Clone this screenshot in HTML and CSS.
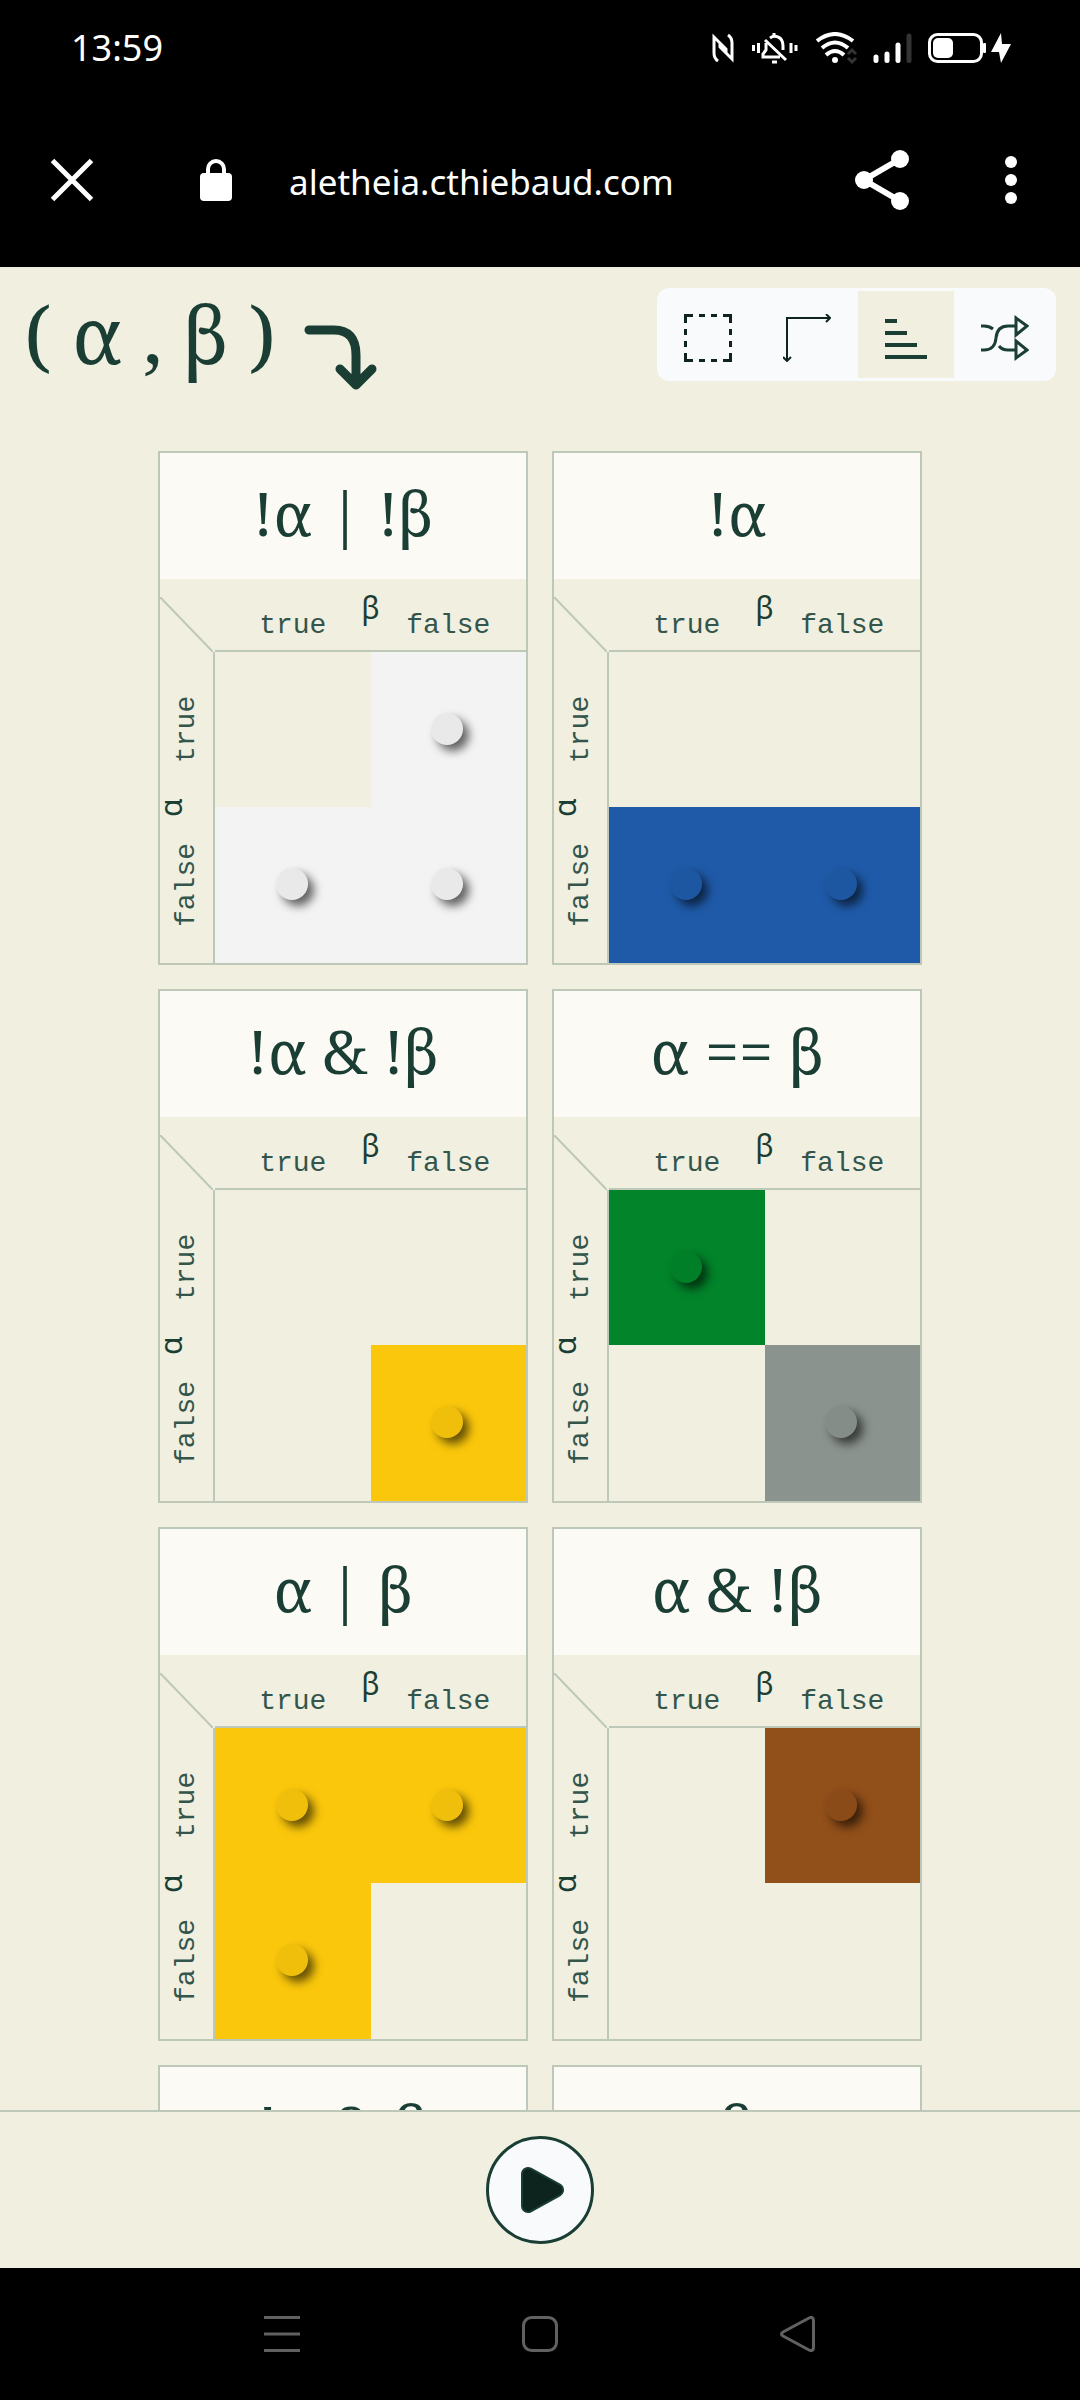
FILE: index.html
```html
<!DOCTYPE html>
<html lang="en">
<head>
<meta charset="utf-8">
<meta name="viewport" content="width=device-width, initial-scale=1">
<title>Aletheia</title>
<link rel="stylesheet" href="styles.css">
</head>
<body>
<div class="status">
  <span class="clock">13:59</span>
  <div class="status-icons">
    <svg class="nfc" width="22" height="30" viewBox="0 0 22 30" fill="none" stroke="#fff" stroke-width="3"><path d="M6 28C3 26 2 24 2 20V4L14 16V20M16 2C19 4 20 6 20 10V26L8 14V10"/></svg>
    <svg class="bell" width="46" height="32" viewBox="0 0 46 32" fill="none" stroke="#fff" stroke-width="3"><path d="M1.500 13V19M6.500 11V21M39 11V21M44 13V19"/><path d="M18 6Q22 3 26 5Q31 7 31 14V18M14 11V18L11 22V25H28M13 8L34 28"/><path d="M22 1V4M20 30H25"/></svg>
    <svg class="wifi" width="42" height="32" viewBox="0 0 42 32" fill="none" stroke="#fff" stroke-width="4"><path d="M1 9Q19-5 37 9M6 16Q19 5 32 16M10 23Q19 15 28 23"/><circle cx="19" cy="28" r="3" fill="#fff" stroke="none"/><path d="M32 22L36 18L40 22M32 26L36 30L40 26" stroke="#333" stroke-width="3"/></svg>
    <svg class="signal" width="40" height="32" viewBox="0 0 40 32" stroke-width="5" stroke-linecap="round"><path d="M3 25V28.500M14 22V28.500M25 13V28.500" stroke="#fff"/><path d="M36 4V28.500" stroke="#333"/></svg>
    <svg width="84" height="32" viewBox="0 0 84 32"><rect x="1.500" y="2.500" width="52" height="27" rx="8" fill="none" stroke="#fff" stroke-width="3"/><rect x="5" y="6" width="20" height="20" rx="5" fill="#fff"/><rect x="55" y="11" width="3" height="10" rx="1" fill="#fff"/><path d="M73 1L63 20H71L73 31L83 12H74Z" fill="#fff"/></svg>
  </div>
</div>
<nav class="browser" aria-label="Browser">
  <button class="plain" aria-label="Close"><svg width="44" height="44" viewBox="0 0 44 44" stroke="#fff" stroke-width="5"><path d="M2.500 2.500L41.500 41.500M41.500 2.500L2.500 41.500"/></svg></button>
  <svg class="lock" width="32" height="44" viewBox="0 0 32 44"><rect y="15" width="32" height="28" rx="4" fill="#fff"/><path d="M8 17V11A8 8 0 0 1 24 11V17" fill="none" stroke="#fff" stroke-width="4"/></svg>
  <span class="url">aletheia.cthiebaud.com</span>
  <button class="plain" aria-label="Share"><svg width="54" height="60" viewBox="0 0 54 60" fill="#fff"><path d="M45 9L9 30L45 51" fill="none" stroke="#fff" stroke-width="6"/><circle cx="45" cy="9" r="9"/><circle cx="9" cy="30" r="9"/><circle cx="45" cy="51" r="9"/></svg></button>
  <button class="plain more" aria-label="More"><svg width="12" height="48" viewBox="0 0 12 48" fill="#fff"><circle cx="6" cy="6" r="6"/><circle cx="6" cy="24" r="6"/><circle cx="6" cy="42" r="6"/></svg></button>
</nav>
<main class="page">
  <header class="top">
    <h1>( α , β )</h1>
    <svg class="arrow" width="74" height="68" viewBox="0 0 74 68" fill="none" stroke="#1a3e34" stroke-width="9" stroke-linecap="round" stroke-linejoin="round"><path d="M5 7H30Q52 7 52 32V60M36 46L52 62L68 46"/></svg>
    <div class="tools" role="toolbar">
      <button aria-label="Square"><svg width="48" height="48" viewBox="0 0 48 48" fill="none" stroke="#10241e" stroke-width="3"><path d="M1.500 9V1.500H9M15 1.500H21M27 1.500H33M39 1.500H46.500V9M46.500 15V21M46.500 27V33M46.500 39V46.500H39M33 46.500H27M21 46.500H15M9 46.500H1.500V39M1.500 33V27M1.500 21V15"/></svg></button>
      <button aria-label="Axes"><svg width="48" height="48" viewBox="0 0 48 48" fill="none" stroke="#10241e" stroke-width="2"><path d="M4 47V4H47M43 0L47 4L43 8M0 43L4 47L8 43"/></svg></button>
      <button class="on" aria-label="Sort"><svg width="48" height="48" viewBox="0 0 48 48" stroke="#1a3e34" stroke-width="4"><path d="M3 7H15M3 19H25M3 31H35M3 43H45"/></svg></button>
      <button aria-label="Shuffle"><svg width="48" height="48" viewBox="0 0 48 48" fill="none" stroke="#1a3e34" stroke-width="3"><path d="M0 12H3Q8 12 12 15M0 36H3Q14 36 15 24Q16 12 27 12H35M18 32Q21 36 27 36H35M35 4V21L46 12ZM35 27V44L46 36Z"/></svg></button>
    </div>
  </header>
  <section class="cards">
    <article class="card">
      <h2>!α | !β</h2>
      <table>
        <thead><tr><td class="corner"><svg width="53" height="55" viewBox="0 0 53 55"><path d="M0 0L53 55" stroke="#bdc8b9" stroke-width="2"/></svg></td><th colspan="2"><div class="axis"><span>true</span><b>β</b><span>false</span></div></th></tr></thead>
        <tbody>
          <tr><th rowspan="2"><div class="axis side"><span>false</span><b>α</b><span>true</span></div></th><td></td><td class="white"><i></i></td></tr>
          <tr><td class="white"><i></i></td><td class="white"><i></i></td></tr>
        </tbody>
      </table>
    </article>
    <article class="card">
      <h2>!α</h2>
      <table>
        <thead><tr><td class="corner"><svg width="53" height="55" viewBox="0 0 53 55"><path d="M0 0L53 55" stroke="#bdc8b9" stroke-width="2"/></svg></td><th colspan="2"><div class="axis"><span>true</span><b>β</b><span>false</span></div></th></tr></thead>
        <tbody>
          <tr><th rowspan="2"><div class="axis side"><span>false</span><b>α</b><span>true</span></div></th><td></td><td></td></tr>
          <tr><td class="blue"><i></i></td><td class="blue"><i></i></td></tr>
        </tbody>
      </table>
    </article>
    <article class="card">
      <h2>!α &amp; !β</h2>
      <table>
        <thead><tr><td class="corner"><svg width="53" height="55" viewBox="0 0 53 55"><path d="M0 0L53 55" stroke="#bdc8b9" stroke-width="2"/></svg></td><th colspan="2"><div class="axis"><span>true</span><b>β</b><span>false</span></div></th></tr></thead>
        <tbody>
          <tr><th rowspan="2"><div class="axis side"><span>false</span><b>α</b><span>true</span></div></th><td></td><td></td></tr>
          <tr><td></td><td class="yellow"><i></i></td></tr>
        </tbody>
      </table>
    </article>
    <article class="card">
      <h2>α == β</h2>
      <table>
        <thead><tr><td class="corner"><svg width="53" height="55" viewBox="0 0 53 55"><path d="M0 0L53 55" stroke="#bdc8b9" stroke-width="2"/></svg></td><th colspan="2"><div class="axis"><span>true</span><b>β</b><span>false</span></div></th></tr></thead>
        <tbody>
          <tr><th rowspan="2"><div class="axis side"><span>false</span><b>α</b><span>true</span></div></th><td class="green"><i></i></td><td></td></tr>
          <tr><td></td><td class="gray"><i></i></td></tr>
        </tbody>
      </table>
    </article>
    <article class="card">
      <h2>α | β</h2>
      <table>
        <thead><tr><td class="corner"><svg width="53" height="55" viewBox="0 0 53 55"><path d="M0 0L53 55" stroke="#bdc8b9" stroke-width="2"/></svg></td><th colspan="2"><div class="axis"><span>true</span><b>β</b><span>false</span></div></th></tr></thead>
        <tbody>
          <tr><th rowspan="2"><div class="axis side"><span>false</span><b>α</b><span>true</span></div></th><td class="yellow"><i></i></td><td class="yellow"><i></i></td></tr>
          <tr><td class="yellow"><i></i></td><td></td></tr>
        </tbody>
      </table>
    </article>
    <article class="card">
      <h2>α &amp; !β</h2>
      <table>
        <thead><tr><td class="corner"><svg width="53" height="55" viewBox="0 0 53 55"><path d="M0 0L53 55" stroke="#bdc8b9" stroke-width="2"/></svg></td><th colspan="2"><div class="axis"><span>true</span><b>β</b><span>false</span></div></th></tr></thead>
        <tbody>
          <tr><th rowspan="2"><div class="axis side"><span>false</span><b>α</b><span>true</span></div></th><td></td><td class="brown"><i></i></td></tr>
          <tr><td></td><td></td></tr>
        </tbody>
      </table>
    </article>
    <article class="card"><h2>!α &amp; β</h2></article>
    <article class="card"><h2>β</h2></article>
  </section>
</main>
<footer class="player">
  <button class="play" aria-label="Play"><svg width="46" height="48" viewBox="0 0 46 48"><path d="M8 8V40L37 24Z" fill="#0d231d" stroke="#1a3e34" stroke-width="14" stroke-linejoin="round"/><path d="M8 8V40L37 24Z" fill="#0d231d" stroke="#0d231d" stroke-width="10" stroke-linejoin="round"/></svg></button>
</footer>
<nav class="system" aria-label="System">
  <button class="plain" aria-label="Recent"><svg width="36" height="36" viewBox="0 0 36 36" stroke="#616161" stroke-width="3"><path d="M0 1.500H36M0 18H36M0 34.500H36"/></svg></button>
  <button class="plain" aria-label="Home"><svg width="36" height="36" viewBox="0 0 36 36" fill="none" stroke="#616161" stroke-width="3"><rect x="1.500" y="1.500" width="33" height="33" rx="8"/></svg></button>
  <button class="plain" aria-label="Back"><svg width="36" height="36" viewBox="0 0 36 36" fill="none" stroke="#616161" stroke-width="3" stroke-linejoin="round"><path d="M29 2Q33.500 0 33.500 5V31Q33.500 36 29 34L3 20Q0 18 3 16Z"/></svg></button>
</nav>
</body>
</html>
```
FILE: styles.css
```css
* { box-sizing: border-box; }
body {
  margin: 0;
  height: 100vh;
  display: flex;
  flex-direction: column;
  background: #000;
  color: #1a3e34;
  font-family: "Noto Serif", "DejaVu Serif", serif;
}
button { border: 0; padding: 0; cursor: pointer; color: inherit; }
svg { display: block; flex: none; }
.plain { background: none; }

.status {
  flex: none;
  height: 96px;
  padding: 0 68px 0 71px;
  display: flex;
  align-items: center;
  justify-content: space-between;
  color: #fff;
  font: 36px/48px "Noto Sans", sans-serif;
}
.status-icons { display: flex; align-items: center; }
.nfc, .bell { margin-right: 18px; }
.wifi, .signal { margin-right: 15px; }

.browser {
  flex: none;
  height: 171px;
  padding: 0 63px 0 50px;
  display: flex;
  align-items: center;
  color: #fff;
}
.browser .plain, .lock { margin-bottom: 4px; }
.lock { margin-left: 106px; margin-right: 57px; }
.url { flex: 1; font: 35px/48px "Noto Sans", sans-serif; }
.browser .more { margin-left: 96px; }

.page {
  flex: 1;
  min-height: 0;
  overflow: hidden;
  background: #f0efe0;
}
.top {
  display: flex;
  align-items: flex-start;
  padding: 21px 24px;
}
h1, h2 { margin: 0; font-weight: 400; }
h1 { font-size: 79px; line-height: 92px; }
.arrow { margin: 35px 0 0 28px; }
.tools {
  display: flex;
  gap: 3px;
  margin-left: auto;
  padding: 3px;
  border-radius: 12px;
  background: #f8fafc;
}
.tools button {
  display: grid;
  place-items: center;
  width: 96px;
  height: 87px;
  padding-top: 6px;
  background: none;
}
.tools .on { background: #f0efe0; }

.cards {
  display: grid;
  grid-template-columns: repeat(auto-fit, 370px);
  justify-content: center;
  gap: 24px;
  max-width: 1000px;
  margin: 0 auto;
  padding-top: 39px;
}
.card { border: 2px solid #bdc8b9; }
.card h2 {
  padding-bottom: 6px;
  background: #fbfaf5;
  font-size: 61px;
  line-height: 120px;
  text-align: center;
}
table {
  width: 100%;
  table-layout: fixed;
  border-collapse: separate;
  border-spacing: 0;
}
td, th { padding: 0; height: 156px; font-weight: 400; }
td { padding: 0 2px 2px 0; }
tbody tr:first-child td { height: 155px; }
thead td, thead th { height: 73px; }
thead th { border-bottom: 2px solid #bdc8b9; }
.corner { width: 55px; padding: 0; vertical-align: bottom; }
tbody th { border-right: 2px solid #bdc8b9; }
.axis {
  display: grid;
  grid-template-columns: 1fr 1fr;
  grid-template-rows: 1fr;
  height: 71px;
  align-items: end;
  justify-items: center;
  padding-bottom: 8px;
  color: #33554b;
  font: 28px/32px "Liberation Mono", monospace;
}
.axis span { grid-area: 1 / 1; }
.axis span:last-child { grid-area: 1 / 2; }
.axis b {
  grid-area: 1 / 1 / 2 / 3;
  padding-bottom: 18px;
  color: #1a3e34;
  font: 30px/32px "Noto Sans", sans-serif;
}
.side {
  width: 53px;
  height: 311px;
  padding: 0 0 0 10px;
  writing-mode: vertical-rl;
  transform: rotate(180deg);
}
.side b { padding: 0 0 0 22px; line-height: 20px; }
td i {
  display: block;
  width: 32px;
  height: 32px;
  margin: 0 auto;
  border-radius: 50%;
  background: rgba(0, 0, 0, 0.04);
  box-shadow: 6px 6px 10px rgba(0, 0, 0, 0.6);
}
.white { background: #f3f3f3; }
.blue { background: #1f5aa8; }
.yellow { background: #fac70c; }
.green { background: #02842a; }
.gray { background: #8a938d; }
.brown { background: #914f1a; }

.player {
  flex: none;
  display: flex;
  justify-content: center;
  padding: 24px;
  border-top: 2px solid #bdc8b9;
  background: #f0efe0;
}
.play {
  display: grid;
  place-items: center;
  width: 108px;
  height: 108px;
  padding-left: 6px;
  border: 3px solid #1a3e34;
  border-radius: 50%;
  background: #f8fafc;
}
.system {
  flex: none;
  height: 132px;
  display: flex;
  align-items: center;
  justify-content: center;
  gap: 222px;
}
```
